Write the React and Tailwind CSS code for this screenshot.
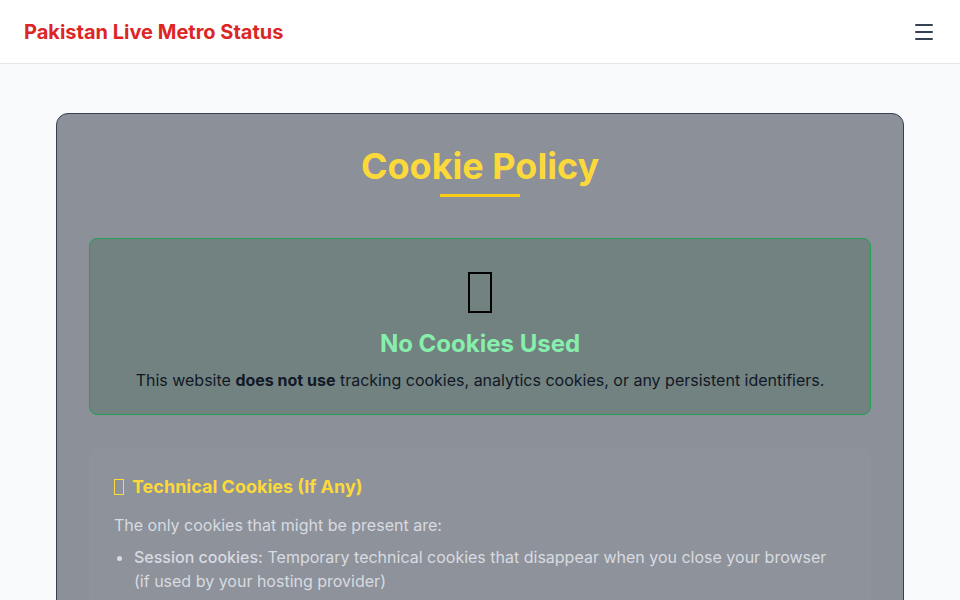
import { Menu } from 'lucide-react';

export default function App() {
  return (
    <div className="min-h-screen bg-[#f8fafc] font-['Inter','Noto_Sans',sans-serif]">
      {/* Header */}
      <header className="h-16 bg-white border-b border-gray-200 flex items-center justify-between px-6">
        <h1 className="text-xl font-bold text-[#dc2626]">Pakistan Live Metro Status</h1>
        <button className="text-gray-700">
          <Menu className="w-6 h-6" strokeWidth={2} />
        </button>
      </header>

      {/* Main */}
      <main className="px-14 pt-[49px]">
        <div className="bg-[#8b9099] border border-[#374151] rounded-xl px-8 pt-8 pb-8">
          <div className="flex flex-col items-center">
            <h2 className="text-4xl font-bold text-[#fcd93a] leading-10">Cookie Policy</h2>
            <div className="w-20 h-[3px] bg-[#facc15] mt-2"></div>
          </div>

          {/* No cookies box */}
          <div className="mt-[41px] border border-[#22a055] bg-[#728280] rounded-lg px-6 pt-6 pb-[22px] text-center">
            <div className="h-12 flex items-start justify-center" aria-label="🍪">
              <span className="mt-[9px] w-[24px] h-[41px] border-2 border-black"></span>
            </div>
            <h3 className="text-2xl font-bold text-[#86efac] mt-[17px] leading-8">No Cookies Used</h3>
            <p className="text-base text-[#111827] mt-2 leading-6">
              This website <strong className="font-bold">does not use</strong> tracking cookies, analytics cookies, or any persistent identifiers.
            </p>
          </div>

          {/* Technical cookies */}
          <div className="mt-8 bg-[#8d929b] rounded-lg px-[25px] pt-[26px] pb-6">
            <h3 className="text-lg font-bold text-[#fcd93a] leading-7 flex items-center gap-2">
              <span className="inline-block w-[10px] h-[16px] border border-[#fcd93a]" aria-label="🔧"></span>
              <span>Technical Cookies (If Any)</span>
            </h3>
            <p className="text-base text-[#d9dbe0] mt-3 leading-6">The only cookies that might be present are:</p>
            <ul className="list-disc pl-5 mt-2 text-base text-[#d9dbe0] leading-6">
              <li>
                <span className="font-medium">Session cookies:</span> Temporary technical cookies that disappear when you close your browser (if used by your hosting provider)
              </li>
              <li className="mt-2">
                <span className="font-medium">Security cookies:</span> Cookies used to protect the website against abuse
              </li>
            </ul>
          </div>
        </div>
      </main>
    </div>
  );
}
